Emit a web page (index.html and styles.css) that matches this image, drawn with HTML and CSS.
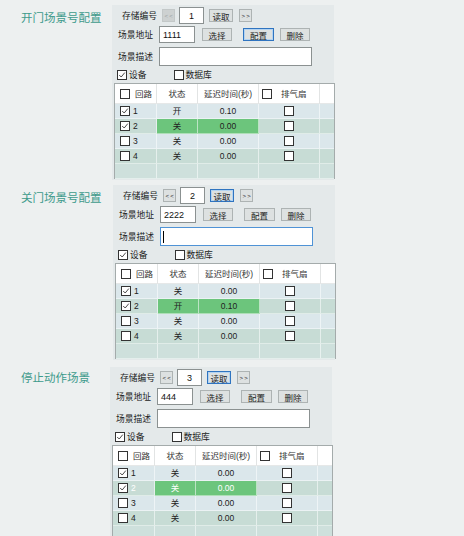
FILE: index.html
```html
<!DOCTYPE html>
<html lang="zh">
<head>
<meta charset="utf-8">
<link rel="stylesheet" href="styles.css">
</head>
<body>

<section class="scene s1">
  <div class="title">开门场景号配置</div>
  <div class="panel">
    <div class="row r1">
      <span class="lbl">存储编号</span>
      <div class="btn nav dis">&lt; &lt;</div>
      <div class="inp num">1</div>
      <div class="btn read">读取</div>
      <div class="btn nav next">&gt; &gt;</div>
    </div>
    <div class="row r2">
      <span class="lbl">场景地址</span>
      <div class="inp addr">1111</div>
      <div class="btn act sel">选择</div>
      <div class="btn act cfg focus">配置</div>
      <div class="btn act del">删除</div>
    </div>
    <div class="row r3">
      <span class="lbl">场景描述</span>
      <div class="inp desc"></div>
    </div>
    <div class="row r4">
      <label class="opt o1"><span class="chk on"><svg viewBox="0 0 10 10"><polyline points="1.5,5 4,7.5 8.5,2"/></svg></span>设备</label>
      <label class="opt o2"><span class="chk"></span>数据库</label>
    </div>
    <div class="tbl">
      <div class="tr head">
        <div class="c c1"><span class="chk"></span><span class="t">回路</span></div>
        <div class="c mid">状态</div>
        <div class="c mid">延迟时间(秒)</div>
        <div class="c c4"><span class="chk"></span><span class="t">排气扇</span></div>
        <div class="c"></div>
      </div>
      <div class="tr odd">
        <div class="c c1"><span class="chk on"><svg viewBox="0 0 10 10"><polyline points="1.5,5 4,7.5 8.5,2"/></svg></span><span class="n">1</span></div>
        <div class="c mid">开</div>
        <div class="c mid">0.10</div>
        <div class="c mid"><span class="chk"></span></div>
        <div class="c"></div>
      </div>
      <div class="tr even">
        <div class="c c1"><span class="chk on"><svg viewBox="0 0 10 10"><polyline points="1.5,5 4,7.5 8.5,2"/></svg></span><span class="n">2</span></div>
        <div class="c mid g">关</div>
        <div class="c mid g">0.00</div>
        <div class="c mid"><span class="chk"></span></div>
        <div class="c"></div>
      </div>
      <div class="tr odd">
        <div class="c c1"><span class="chk"></span><span class="n">3</span></div>
        <div class="c mid">关</div>
        <div class="c mid">0.00</div>
        <div class="c mid"><span class="chk"></span></div>
        <div class="c"></div>
      </div>
      <div class="tr even">
        <div class="c c1"><span class="chk"></span><span class="n">4</span></div>
        <div class="c mid">关</div>
        <div class="c mid">0.00</div>
        <div class="c mid"><span class="chk"></span></div>
        <div class="c"></div>
      </div>
      <div class="tr empty">
        <div class="c"></div><div class="c"></div><div class="c"></div><div class="c"></div><div class="c"></div>
      </div>
    </div>
  </div>
</section>

<section class="scene s2">
  <div class="title">关门场景号配置</div>
  <div class="panel">
    <div class="row r1">
      <span class="lbl">存储编号</span>
      <div class="btn nav">&lt; &lt;</div>
      <div class="inp num">2</div>
      <div class="btn read focus">读取</div>
      <div class="btn nav next">&gt; &gt;</div>
    </div>
    <div class="row r2">
      <span class="lbl">场景地址</span>
      <div class="inp addr">2222</div>
      <div class="btn act sel">选择</div>
      <div class="btn act cfg">配置</div>
      <div class="btn act del">删除</div>
    </div>
    <div class="row r3">
      <span class="lbl">场景描述</span>
      <div class="inp desc active"><span class="caret"></span></div>
    </div>
    <div class="row r4">
      <label class="opt o1"><span class="chk on"><svg viewBox="0 0 10 10"><polyline points="1.5,5 4,7.5 8.5,2"/></svg></span>设备</label>
      <label class="opt o2"><span class="chk"></span>数据库</label>
    </div>
    <div class="tbl">
      <div class="tr head">
        <div class="c c1"><span class="chk"></span><span class="t">回路</span></div>
        <div class="c mid">状态</div>
        <div class="c mid">延迟时间(秒)</div>
        <div class="c c4"><span class="chk"></span><span class="t">排气扇</span></div>
        <div class="c"></div>
      </div>
      <div class="tr odd">
        <div class="c c1"><span class="chk on"><svg viewBox="0 0 10 10"><polyline points="1.5,5 4,7.5 8.5,2"/></svg></span><span class="n">1</span></div>
        <div class="c mid">关</div>
        <div class="c mid">0.00</div>
        <div class="c mid"><span class="chk"></span></div>
        <div class="c"></div>
      </div>
      <div class="tr even">
        <div class="c c1"><span class="chk on"><svg viewBox="0 0 10 10"><polyline points="1.5,5 4,7.5 8.5,2"/></svg></span><span class="n">2</span></div>
        <div class="c mid g">开</div>
        <div class="c mid g">0.10</div>
        <div class="c mid"><span class="chk"></span></div>
        <div class="c"></div>
      </div>
      <div class="tr odd">
        <div class="c c1"><span class="chk"></span><span class="n">3</span></div>
        <div class="c mid">关</div>
        <div class="c mid">0.00</div>
        <div class="c mid"><span class="chk"></span></div>
        <div class="c"></div>
      </div>
      <div class="tr even">
        <div class="c c1"><span class="chk"></span><span class="n">4</span></div>
        <div class="c mid">关</div>
        <div class="c mid">0.00</div>
        <div class="c mid"><span class="chk"></span></div>
        <div class="c"></div>
      </div>
      <div class="tr empty">
        <div class="c"></div><div class="c"></div><div class="c"></div><div class="c"></div><div class="c"></div>
      </div>
    </div>
  </div>
</section>

<section class="scene s3">
  <div class="title">停止动作场景</div>
  <div class="panel">
    <div class="row r1">
      <span class="lbl">存储编号</span>
      <div class="btn nav">&lt; &lt;</div>
      <div class="inp num">3</div>
      <div class="btn read focus">读取</div>
      <div class="btn nav next">&gt; &gt;</div>
    </div>
    <div class="row r2">
      <span class="lbl">场景地址</span>
      <div class="inp addr">444</div>
      <div class="btn act sel">选择</div>
      <div class="btn act cfg">配置</div>
      <div class="btn act del">删除</div>
    </div>
    <div class="row r3">
      <span class="lbl">场景描述</span>
      <div class="inp desc"></div>
    </div>
    <div class="row r4">
      <label class="opt o1"><span class="chk on"><svg viewBox="0 0 10 10"><polyline points="1.5,5 4,7.5 8.5,2"/></svg></span>设备</label>
      <label class="opt o2"><span class="chk"></span>数据库</label>
    </div>
    <div class="tbl">
      <div class="tr head">
        <div class="c c1"><span class="chk"></span><span class="t">回路</span></div>
        <div class="c mid">状态</div>
        <div class="c mid">延迟时间(秒)</div>
        <div class="c c4"><span class="chk"></span><span class="t">排气扇</span></div>
        <div class="c"></div>
      </div>
      <div class="tr odd">
        <div class="c c1"><span class="chk on"><svg viewBox="0 0 10 10"><polyline points="1.5,5 4,7.5 8.5,2"/></svg></span><span class="n">1</span></div>
        <div class="c mid">关</div>
        <div class="c mid">0.00</div>
        <div class="c mid"><span class="chk"></span></div>
        <div class="c"></div>
      </div>
      <div class="tr even">
        <div class="c c1"><span class="chk on"><svg viewBox="0 0 10 10"><polyline points="1.5,5 4,7.5 8.5,2"/></svg></span><span class="n w">2</span></div>
        <div class="c mid g w">关</div>
        <div class="c mid g w">0.00</div>
        <div class="c mid"><span class="chk"></span></div>
        <div class="c"></div>
      </div>
      <div class="tr odd">
        <div class="c c1"><span class="chk"></span><span class="n">3</span></div>
        <div class="c mid">关</div>
        <div class="c mid">0.00</div>
        <div class="c mid"><span class="chk"></span></div>
        <div class="c"></div>
      </div>
      <div class="tr even">
        <div class="c c1"><span class="chk"></span><span class="n">4</span></div>
        <div class="c mid">关</div>
        <div class="c mid">0.00</div>
        <div class="c mid"><span class="chk"></span></div>
        <div class="c"></div>
      </div>
      <div class="tr empty">
        <div class="c"></div><div class="c"></div><div class="c"></div><div class="c"></div><div class="c"></div>
      </div>
    </div>
  </div>
</section>

</body>
</html>
```

FILE: styles.css
```css
* { box-sizing: border-box; }

html, body {
  margin: 0;
  padding: 0;
}

body {
  width: 464px;
  height: 536px;
  overflow: hidden;
  background: #edf0f0;
  font-family: "Liberation Sans", "Noto Sans CJK SC", sans-serif;
  color: #222;
}

.scene {
  display: flex;
  height: 180px;
}

.s3 {
  margin-top: 2px;
}

.title {
  width: 112px;
  flex: none;
  padding-left: 21px;
  padding-top: 10px;
  font-family: "Noto Sans CJK SC", sans-serif;
  font-size: 11.5px;
  line-height: 14px;
  color: #3d9a8b;
  white-space: nowrap;
}

.s3 .title {
  padding-top: 8px;
}

.panel {
  flex: none;
  width: 222px;
  height: 175px;
  margin-top: 5px;
  padding-top: 2px;
  background: #e4e9ea;
}

.s2 .panel { margin-left: 1px; }
.s3 .panel { margin-left: -2px; height: 176px; }

.row {
  display: flex;
  align-items: center;
}

.r1 { height: 17px; }
.r2 { height: 17px; margin-top: 2px; }
.r3 { height: 19px; margin-top: 4px; }
.r4 { height: 17px; }

.lbl {
  font-family: "Noto Sans CJK SC", sans-serif;
  font-size: 8.75px;
  line-height: 12px;
  white-space: nowrap;
  color: #222;
}

.r1 .lbl { margin-left: 10px; width: 40px; }
.r2 .lbl, .r3 .lbl { margin-left: 6px; width: 41px; }

.inp {
  height: 100%;
  background: #fff;
  border: 1px solid #8b9191;
  font-size: 9px;
  display: flex;
  align-items: center;
  color: #111;
}

.inp.num {
  width: 25px;
  margin-left: 4px;
  justify-content: center;
}

.inp.addr {
  width: 36px;
  padding-left: 3px;
}

.inp.desc {
  width: 153px;
}

.inp.active {
  border-color: #4f93d6;
}

.caret {
  display: block;
  width: 1px;
  height: 12px;
  margin-left: 2px;
  background: #000;
}

.btn {
  height: 13px;
  border: 1px solid #adb3b3;
  background: #dde1e1;
  font-family: "Noto Sans CJK SC", sans-serif;
  font-size: 8.5px;
  line-height: 10px;
  display: flex;
  align-items: center;
  justify-content: center;
  white-space: nowrap;
  color: #222;
}

.nav {
  width: 13px;
  font-family: "Liberation Sans", sans-serif;
  font-size: 6px;
  letter-spacing: -0.3px;
}

.nav.dis {
  background: #cdd1d1;
  border-color: #c3c8c8;
  color: #9aa2a2;
}

.nav.next { margin-left: 6px; }

.read { width: 24px; margin-left: 5px; }

.act { width: 30px; }
.sel { margin-left: 7px; }
.cfg { margin-left: 11px; width: 31px; }
.del { margin-left: 6px; }

.focus {
  border-color: #2f74c0;
  box-shadow: inset 0 0 0 1px #b3d3f1;
}

.opt {
  display: flex;
  align-items: center;
  font-family: "Noto Sans CJK SC", sans-serif;
  font-size: 8.75px;
  line-height: 12px;
  white-space: nowrap;
}

.opt .chk { margin-right: 2px; }
.o1 { margin-left: 5px; }
.o2 { margin-left: 27px; }

.chk {
  display: inline-block;
  flex: none;
  width: 10px;
  height: 10px;
  border: 1px solid #333;
  background: #fff;
  position: relative;
}

.chk svg {
  position: absolute;
  left: 0;
  top: 0;
  width: 8px;
  height: 8px;
  fill: none;
  stroke: #333;
  stroke-width: 1.1;
}

.tbl {
  margin-left: 2px;
  width: 221px;
  border: 1px solid #a4abab;
  border-bottom: none;
}

.tr {
  display: grid;
  grid-template-columns: 42px 41px 61px 61px 14px;
  height: 15px;
}

.tr.head {
  height: 20px;
  background: #fff;
}

.c {
  display: flex;
  align-items: center;
  font-family: "Liberation Sans", "Noto Sans CJK SC", sans-serif;
  font-size: 8.5px;
  line-height: 10px;
  white-space: nowrap;
  color: #222;
  border-right: 1px solid rgba(255, 255, 255, 0.55);
  border-bottom: 1px solid rgba(255, 255, 255, 0.45);
}

.c:last-child { border-right: none; }

.head .c {
  border-right: 1px solid #e2e4e4;
  border-bottom: 1px solid #e6e8e8;
  color: #333;
}

.head .c:last-child { border-right: none; }

.mid { justify-content: center; }

.c1 .chk { margin-left: 5px; }
.c1 .t { margin-left: 5px; }
.c1 .n { margin-left: 3px; }

.c4 .chk { margin-left: 3px; }
.c4 .t { margin-left: 9px; }

.odd { background: #dbe7eb; }
.even { background: #c7dcd5; }
.empty { background: #cee0dc; }

.g { background: #6cc57c; }
.w { color: #fff; }
```
